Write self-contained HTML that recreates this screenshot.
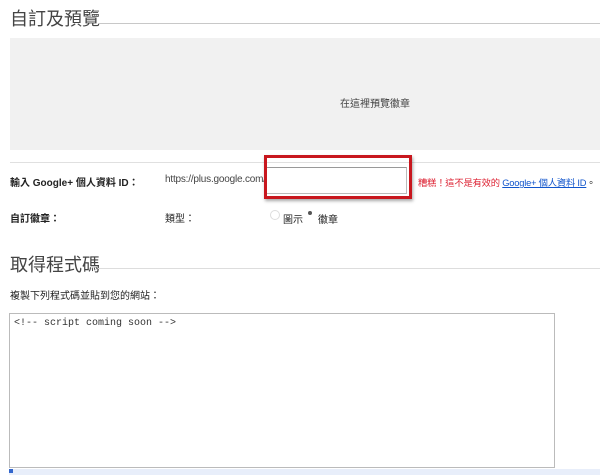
<!DOCTYPE html>
<html><head><meta charset="utf-8"><style>
body{margin:0;width:600px;height:475px;background:#fff;position:relative;overflow:hidden;font-family:"Liberation Sans","Noto Sans CJK TC",sans-serif;color:#222}
.a{position:absolute;white-space:nowrap}
h{position:absolute;font-size:18px;color:#444;font-weight:normal;}
.s{font-size:10px}
</style></head><body>
<h style="left:10px;top:5px">自訂及預覽</h>
<div class="a" style="left:98px;top:23px;width:502px;height:1px;background:#c8c8c8"></div>
<div class="a" style="left:10px;top:38px;width:590px;height:112px;background:#f1f1f1"></div>
<div class="a s" style="left:340px;top:95px;color:#444">在這裡預覽徽章</div>
<div class="a" style="left:10px;top:162px;width:590px;height:1px;background:#e0e0e0"></div>
<div class="a s" style="left:10px;top:174px;font-weight:bold">輸入 Google+ 個人資料 ID：</div>
<div class="a s" style="left:165px;top:174px;color:#444;letter-spacing:-0.2px">https://plus.google.com/</div>
<div class="a" style="left:266px;top:167px;width:139px;height:25px;border:1px solid #bbb;border-top-color:#999"></div>
<div class="a" style="left:264px;top:155px;width:142px;height:38px;border:3px solid #c8171e;box-shadow:1px 2px 3px rgba(0,0,0,.35)"></div>
<div class="a" style="left:418px;top:175px;font-size:9.3px;color:#d23;letter-spacing:-0.2px"><span>糟糕！這不是有效的 </span><span style="color:#15c;text-decoration:underline">Google+ 個人資料 ID</span><span style="color:#222">。</span></div>
<div class="a s" style="left:10px;top:210px;font-weight:bold">自訂徽章：</div>
<div class="a s" style="left:165px;top:210px">類型：</div>
<div class="a" style="left:270px;top:210px;width:8px;height:8px;border-radius:50%;border:1px solid #ddd"></div>
<div class="a s" style="left:283px;top:211px">圖示</div>
<div class="a" style="left:308px;top:211px;width:4px;height:4px;border-radius:50%;background:#555"></div>
<div class="a s" style="left:318px;top:211px">徽章</div>
<h style="left:10px;top:251px">取得程式碼</h>
<div class="a" style="left:98px;top:268px;width:502px;height:1px;background:#ddd"></div>
<div class="a s" style="left:10px;top:287px">複製下列程式碼並貼到您的網站：</div>
<div class="a" style="left:9px;top:313px;width:544px;height:153px;border:1px solid #bbb"></div>
<div class="a" style="left:14px;top:318px;font:10px 'Liberation Mono',monospace;color:#333">&lt;!-- script coming soon --&gt;</div>
<div class="a" style="left:9px;top:469px;width:591px;height:6px;background:#e8eefa"></div>
<div class="a" style="left:9px;top:469px;width:4px;height:4px;background:#36c"></div>
</body></html>
